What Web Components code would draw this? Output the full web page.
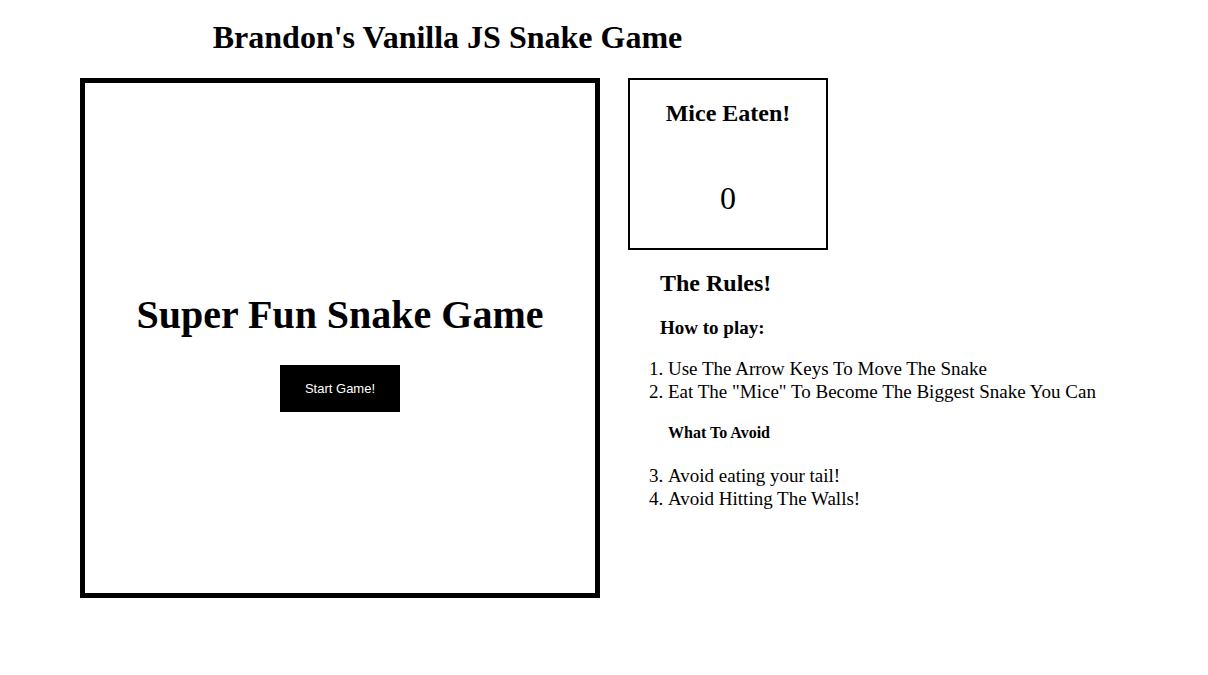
<!DOCTYPE html>
<html lang="en">
<head>
<meta charset="utf-8">
<meta name="viewport" content="width=device-width, initial-scale=1">
<title>Snake Game</title>
<style>
body { margin: 0; background: #fff; color: #000; font-family: "Liberation Serif", "Times New Roman", serif; }
</style>
</head>
<body>
<snake-app></snake-app>
<script>
function define(name, html) {
  const template = document.createElement('template');
  template.innerHTML = html;
  customElements.define(name, class extends HTMLElement {
    constructor() {
      super();
      this.attachShadow({ mode: 'open' }).append(template.content.cloneNode(true));
    }
  });
}

define('game-board', `
<style>
:host { display: flex; flex-direction: column; align-items: center; justify-content: center; box-sizing: border-box; aspect-ratio: 1; padding-top: 28px; border: 5px solid #000; }
h2 { margin: 0 0 28px; font-size: 40px; line-height: 44px; text-align: center; }
button { min-width: 120px; padding: 16px 20px; border: 0; background: #000; color: #fff; font: 13px/15px "Liberation Sans", Arial, sans-serif; cursor: pointer; }
</style>
<h2><slot></slot></h2>
<button type="button"><slot name="action"></slot></button>`);

define('score-card', `
<style>
:host { display: block; box-sizing: border-box; width: 200px; padding: 20px 0 32px; border: 2px solid #000; text-align: center; }
h2 { margin: 0 0 54px; font-size: 24px; line-height: 26px; }
p { margin: 0; font-size: 32px; line-height: 36px; }
</style>
<h2><slot></slot></h2>
<p><slot name="count"></slot></p>`);

define('game-rules', `
<style>
:host { display: block; padding-top: 20px; }
h2, h3 { margin: 0 0 22px 32px; }
h2 { font-size: 24px; line-height: 26px; }
h3 { margin-bottom: 19px; font-size: 19px; line-height: 20px; }
ol { margin: 0; padding-left: 40px; font-size: 19px; line-height: 23px; }
h4 { margin: 21px 0 22px 40px; font-size: 16px; line-height: 18px; }
</style>
<h2>The Rules!</h2>
<h3>How to play:</h3>
<ol>
<li>Use The Arrow Keys To Move The Snake</li>
<li>Eat The "Mice" To Become The Biggest Snake You Can</li>
</ol>
<h4>What To Avoid</h4>
<ol start="3">
<li>Avoid eating your tail!</li>
<li>Avoid Hitting The Walls!</li>
</ol>`);

define('snake-app', `
<style>
:host { display: block; padding: 20px 80px 40px; }
header { display: flex; justify-content: center; padding-right: 313px; }
h1 { margin: 0 0 24px; font-size: 32px; line-height: 34px; }
main { display: grid; grid-template-columns: minmax(0, 520px) minmax(0, 1fr); gap: 28px; align-items: start; }
</style>
<header><h1>Brandon's Vanilla JS Snake Game</h1></header>
<main>
<game-board>Super Fun Snake Game<span slot="action">Start Game!</span></game-board>
<section>
<score-card>Mice Eaten!<span slot="count">0</span></score-card>
<game-rules></game-rules>
</section>
</main>`);
</script>
</body>
</html>
